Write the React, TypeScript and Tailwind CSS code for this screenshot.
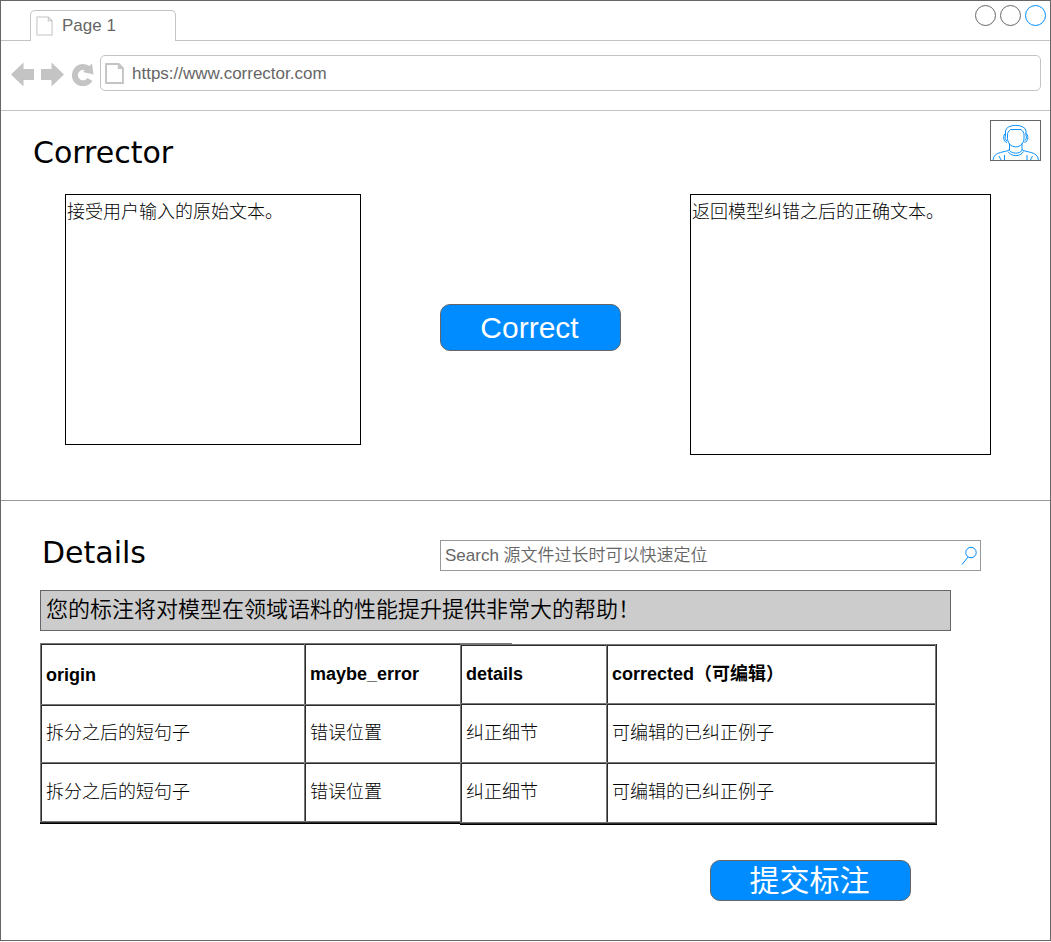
const cjk = "font-['Liberation_Sans','Noto_Sans_CJK_SC',sans-serif]";

function PageIcon({ className, width }: { className: string; width: number }) {
  return (
    <svg className={className} viewBox="0 0 18 21" preserveAspectRatio="none" fill="none" stroke="#c4c4c4" strokeWidth={width}>
      <path d="M1 1H13L17 5V20H1Z M13 1V5H17" />
    </svg>
  );
}

const splitRows = [
  ["origin", "maybe_error"],
  ["拆分之后的短句子", "错误位置"],
  ["拆分之后的短句子", "错误位置"],
];
const fixRows = [
  ["details", "corrected（可编辑）"],
  ["纠正细节", "可编辑的已纠正例子"],
  ["纠正细节", "可编辑的已纠正例子"],
];

const line = "border-t border-l border-[#777]";
const inner = "border-t border-l border-[#2b2b2b]";

function Grid({ rows, cols, heights, closed }: { rows: string[][]; cols: string[]; heights: string[]; closed?: boolean }) {
  return (
    <div>
      <div className={closed ? "border-r border-[#2b2b2b]" : ""}>
        <div className={closed ? "border-r border-[#777]" : ""}>
          {rows.map((row, r) => (
            <div key={r} className={`flex ${heights[r]}`}>
              {row.map((cell, c) => (
                <div key={c} className={`${line} ${cols[c]}`}>
                  <div className={`${inner} flex h-full items-center pl-1 text-[18px] leading-none whitespace-nowrap ${cell === "origin" ? "pb-0" : "pb-[2px]"} ${r === 0 ? "font-bold" : "font-light"}`}>
                    {cell}
                  </div>
                </div>
              ))}
            </div>
          ))}
          <div className="h-px bg-[#777]" />
        </div>
        <div className="h-px bg-[#2b2b2b]" />
      </div>
      <div className="h-px bg-black" />
    </div>
  );
}

export default function App() {
  return (
    <div className={`h-[941px] w-[1051px] overflow-hidden border border-[#666] bg-white text-black ${cjk}`}>
      <header className="h-[110px] border-b border-[#c4c4c4]">
        <div className="flex h-10 items-end">
          <div className="h-full w-[29px] border-b border-[#c4c4c4]" />
          <div className="flex h-[31px] w-[146px] items-center rounded-t-[5px] border border-b-0 border-[#c4c4c4] pl-[5px]">
            <PageIcon className="h-[20px] w-[17px]" width={1.1} />
            <span className="mb-[2px] ml-[9px] text-[17px] leading-none text-[#666]">Page 1</span>
          </div>
          <div className="flex h-full grow justify-end gap-1 border-b border-[#c4c4c4] pt-1 pr-[4px]">
            <div className="size-[21px] rounded-full border border-[#666]" />
            <div className="size-[21px] rounded-full border border-[#666]" />
            <div className="size-[21px] rounded-full border border-[#008cff]" />
          </div>
        </div>
        <div className="flex pt-[14px] pr-[9px] pl-[10px]">
          <svg className="mt-[7px] h-6 w-[89px]" viewBox="0 0 89 24" fill="#c4c4c4">
            <path d="M0 12.500L12.500 0.500V7H23V18H12.500V24.500Z" />
            <path d="M53 12.500L40.500 0.500V7H30V18H40.500V24.500Z" />
            <path d="M79 17.500A8.200 8.200 0 1 1 77.500 7" fill="none" stroke="#c4c4c4" strokeWidth="6" />
            <path d="M81 1.500L82.500 12.500L72 10Z" />
          </svg>
          <div className="flex h-9 grow items-center rounded-[5px] border border-[#c4c4c4] pl-[4px]">
            <PageIcon className="h-[21px] w-[19px]" width={1.8} />
            <span className="ml-2 text-[17px] leading-none text-[#666]">https://www.corrector.com</span>
          </div>
        </div>
      </header>

      <section className="h-[390px] border-b border-[#999]">
        <div className="flex h-[83px] justify-between pt-[9px] pr-[9px] pl-[32px]">
          <h1 className="pt-[15px] font-['DejaVu_Sans',sans-serif] text-[30px] leading-9">Corrector</h1>
          <div className="h-[41px] w-[51px] border border-[#666]">
            <svg viewBox="0 0 49 39" className="h-full w-full" fill="none" stroke="#008cff" strokeWidth=".95">
              <path d="M14.500 14V10C15 2.500 34.500 2.500 35 10V14M16.500 15C16 11.500 18 10 19.500 8.500H30C31.500 10 33.500 11.500 33 15C34.500 29.500 15 29.500 16.500 15" />
              <path d="M15 12.500C11.500 13 12 21 16 21.500M14.500 14C13.500 17 14.500 19 16 20M34.500 12.500C38 13 37.500 21 33.500 21.500M35 14C36 17 35 19 33.500 20" />
              <path d="M18.500 22.500V29.500C21 33 28.500 33 31 29.500V22.500M17 30.500C20 36 29.500 36 32.500 30.500M18.500 28.500C15 32 3 29.500 2 39M31 28.500C34.500 32 46.500 29.500 47.500 39" />
              <path d="M8 35L10 39M13.500 34V39M36 34V39M41.500 35L39.500 39" />
            </svg>
          </div>
        </div>
        <div className="flex items-start pl-16">
          <div className="h-[251px] w-[296px] border border-black pt-[7px] pl-px text-[18px] leading-[20px] font-light">接受用户输入的原始文本。</div>
          <button className="mt-[110px] ml-[79px] h-[47px] w-[181px] rounded-[10px] border border-[#666] bg-[#008cff] pr-[2px] text-[30px] leading-none text-white">Correct</button>
          <div className="ml-[69px] h-[261px] w-[301px] border border-black pt-[7px] pl-px text-[18px] leading-[20px] font-light">返回模型纠错之后的正确文本。</div>
        </div>
      </section>

      <section className="flex flex-col items-start pt-[39px] pl-[39px]">
        <div className="flex h-[50px]">
          <h2 className="w-[400px] pl-[2px] font-['DejaVu_Sans',sans-serif] text-[30px] leading-[25px]">Details</h2>
          <div className="flex h-[31px] w-[541px] items-center justify-between border border-[#999] pr-[3px] pl-1 text-[17px] leading-none font-[350] text-[#666]">
            <span>Search 源文件过长时可以快速定位</span>
            <svg className="h-5 w-4" viewBox="0 0 16 20" fill="none" stroke="#008cff">
              <circle cx="10" cy="6.500" r="5.200" />
              <path d="M7 11L1 18.500" />
            </svg>
          </div>
        </div>
        <div className="flex h-[41px] w-[911px] items-center border border-[#666] bg-[#ccc] pb-[2px] pl-[5px] text-[22px] leading-none font-[350]">
          您的标注将对模型在领域语料的性能提升提供非常大的帮助！
        </div>
        <div className="mt-3 flex items-start">
          <Grid rows={splitRows} cols={["w-[264px]", "w-[156px]"]} heights={["h-[61px]", "h-[58px]", "h-[59px]"]} />
          <div>
            <div className="h-px w-[52px] bg-[#777]" />
            <Grid rows={fixRows} cols={["w-[146px]", "w-[329px]"]} heights={["h-[59px]", "h-[59px]", "h-[60px]"]} closed />
          </div>
        </div>
        <button className="mt-[35px] ml-[670px] h-[41px] w-[201px] rounded-[10px] border border-[#666] bg-[#008cff] pr-[2px] text-[30px] leading-none text-white">提交标注</button>
      </section>
    </div>
  );
}
